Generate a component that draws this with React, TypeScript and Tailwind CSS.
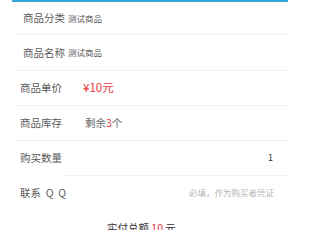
import React from "react";

const font = { fontFamily: '"Noto Sans CJK SC", "Noto Sans", sans-serif' };

function Row({ label, children, indent, line = "ml-[3px]" }: { label: string; children?: React.ReactNode; indent?: boolean; line?: string }) {
  return (
    <div className="h-[35px] flex flex-col">
      <div className={`flex-1 flex items-center ${indent ? "pl-3" : "pl-2"} pr-[14px]`}>
        <span className="text-[10.5px] text-[#5a5a5a] w-[63px] shrink-0">{label}</span>
        {children}
      </div>
      <div className={`h-px bg-[#f1f1f1] ${line}`} />
    </div>
  );
}

export default function App() {
  return (
    <div className="w-[300px] h-[230px] overflow-hidden bg-white" style={font}>
      <div className="mx-3">
        <div className="h-[2px] bg-[#35a6de]" />
        <div className="h-[32px] flex items-center pl-[11px]">
          <span className="text-[10.5px] text-[#5a5a5a] mr-[3px]">商品分类</span>
          <span className="text-[8.5px] text-[#555]">测试商品</span>
        </div>
        <div className="h-px bg-[#f3f3f3]" />
        <div className="h-[35px] flex items-center pl-[11px]">
          <span className="text-[10.5px] text-[#5a5a5a] mr-[3px]">商品名称</span>
          <span className="text-[8.5px] text-[#555]">测试商品</span>
        </div>
        <div className="h-px bg-[#f3f3f3]" />
        <Row label="商品单价">
          <span className="text-[11.5px] text-[#e8373b]">¥10元</span>
        </Row>
        <Row label="商品库存">
          <span className="text-[10.5px] text-[#666] ml-[2px]">
            剩余<span className="text-[#e8373b]">3</span>个
          </span>
        </Row>
        <Row label="购买数量" line="ml-[51px]">
          <span className="ml-auto text-[9px] text-[#333] pr-[1px]">1</span>
        </Row>
        <div className="h-[33px] flex items-center pl-2 pr-[14px]">
          <span className="text-[10.5px] text-[#5a5a5a] whitespace-pre">联系  Q  Q</span>
          <span className="ml-auto text-[8.5px] text-[#b5b5b5]">必填，作为购买者凭证</span>
        </div>
        <div className="pt-[11px] flex pl-[95px]">
          <span className="text-[10.5px] text-[#333] whitespace-pre">
            实付总额 <span className="text-[#e8373b]">10</span> 元
          </span>
        </div>
      </div>
    </div>
  );
}
